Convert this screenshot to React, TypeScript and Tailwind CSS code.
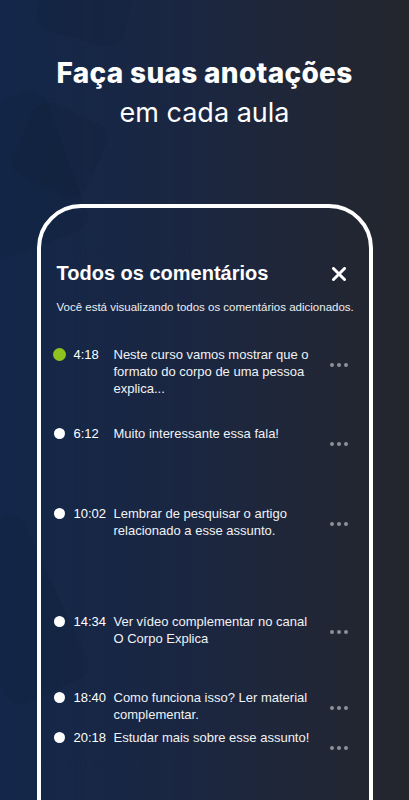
import React from 'react';

type Note = {
  time: string;
  text: string;
  active?: boolean;
  gap: string; // espaço acima da linha
};

const notes: Note[] = [
  { time: '4:18', text: 'Neste curso vamos mostrar que o formato do corpo de uma pessoa explica...', active: true, gap: 'mt-0' },
  { time: '6:12', text: 'Muito interessante essa fala!', gap: 'mt-[28px]' },
  { time: '10:02', text: 'Lembrar de pesquisar o artigo relacionado a esse assunto.', gap: 'mt-[59px]' },
  { time: '14:34', text: 'Ver vídeo complementar no canal O Corpo Explica', gap: 'mt-[74px]' },
  { time: '18:40', text: 'Como funciona isso? Ler material complementar.', gap: 'mt-[42px]' },
  { time: '20:18', text: 'Estudar mais sobre esse assunto!', gap: 'mt-[6px]' },
];

function MoreDots() {
  return (
    <div className="mt-[17px] flex gap-[3px]">
      <span className="w-[4px] h-[4px] rounded-full bg-[#8b9099]" />
      <span className="w-[4px] h-[4px] rounded-full bg-[#8b9099]" />
      <span className="w-[4px] h-[4px] rounded-full bg-[#8b9099]" />
    </div>
  );
}

function NoteRow({ note }: { note: Note }) {
  return (
    <div className={`flex items-start ${note.gap}`}>
      {/* marcador */}
      <div className="w-[14px] h-[17px] flex items-center justify-center shrink-0">
        {note.active ? (
          <span className="w-[13px] h-[13px] rounded-full bg-[#8fc31f]" />
        ) : (
          <span className="w-[11px] h-[11px] rounded-full bg-white" />
        )}
      </div>
      <span className="w-[47px] pl-[7px] shrink-0 text-[13px] leading-[17px] text-white">{note.time}</span>
      <p className="w-[200px] shrink-0 text-[13px] leading-[17px] text-[#f1f2f4]">{note.text}</p>
      <div className="ml-[16px]">
        <MoreDots />
      </div>
    </div>
  );
}

export default function App() {
  return (
    <div
      className="relative h-[800px] w-full overflow-hidden bg-gradient-to-r from-[#13274a] via-[#1b2640] to-[#24262d]"
      style={{ fontFamily: '"Liberation Sans", Arial, sans-serif' }}
    >
      {/* formas decorativas do fundo */}
      <div className="absolute -left-[40px] top-[100px] w-[110px] h-[150px] rounded-[18px] bg-black/[0.05] rotate-[-20deg]" />
      <div className="absolute left-[20px] top-[110px] w-[80px] h-[80px] rounded-[16px] bg-black/[0.05] rotate-[25deg]" />
      <div className="absolute left-[40px] top-[-30px] w-[90px] h-[70px] rounded-[16px] bg-black/[0.05] rotate-[15deg]" />
      <div className="absolute -left-[30px] top-[520px] w-[90px] h-[180px] rounded-[18px] bg-black/[0.05] rotate-[-25deg]" />

      <div className="relative flex flex-col items-center">
        <h1
          className="pt-[54px] text-center text-white leading-[39px]"
          style={{ fontFamily: 'Inter, "Noto Sans", sans-serif' }}
        >
          <span className="block text-[28px] font-extrabold tracking-[0.3px]">Faça suas anotações</span>
          <span className="block text-[27px] font-normal">em cada aula</span>
        </h1>

        {/* moldura do celular */}
        <div className="mt-[72px] w-[336px] h-[640px] shrink-0 rounded-[44px] border-[4px] border-white">
          <div className="pt-[53px] pl-[16px] pr-[23px] flex items-center justify-between">
            <h2 className="text-[20px] leading-[24px] font-bold text-white">Todos os comentários</h2>
            <svg width="14" height="14" viewBox="0 0 14 14" className="mt-[1px]">
              <path d="M1.5 1.5 L12.5 12.5 M12.5 1.5 L1.5 12.5" stroke="white" strokeWidth="3" strokeLinecap="round" />
            </svg>
          </div>
          <p className="mt-[15px] pl-[16px] text-[11.5px] leading-[14px] text-[#eceef1] whitespace-nowrap">
            Você está visualizando todos os comentários adicionados.
          </p>

          <div className="mt-[32px] pl-[12px]">
            {notes.map((n) => (
              <NoteRow key={n.time} note={n} />
            ))}
          </div>
        </div>
      </div>
    </div>
  );
}
